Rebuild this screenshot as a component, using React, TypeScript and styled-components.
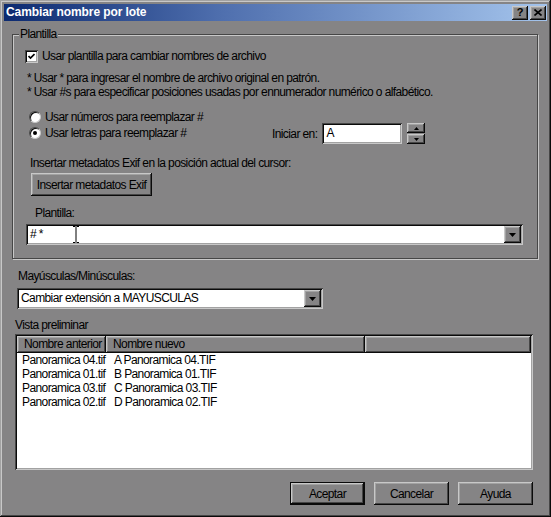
import React from 'react';
import styled, { createGlobalStyle, css } from 'styled-components';

const FACE = '#858485';
const LIGHT = '#c8c8c8';
const MID = '#a2a2a2';
const DARK = '#464646';
const DARKEST = '#0a0a0a';

const Global = createGlobalStyle`
  html, body { margin: 0; padding: 0; background: ${FACE}; }
  body {
    font-family: "Liberation Sans", Arial, sans-serif;
    font-size: 12px;
    letter-spacing: -0.6px;
    color: #000;
  }
  * { box-sizing: border-box; }
`;

const raised = css`
  background: ${FACE};
  box-shadow: inset -1px -1px ${DARKEST}, inset 1px 1px ${LIGHT}, inset -2px -2px ${DARK}, inset 2px 2px ${MID};
`;

const sunken = css`
  box-shadow: inset 1px 1px ${DARK}, inset -1px -1px ${LIGHT}, inset 2px 2px ${DARKEST}, inset -2px -2px ${MID};
`;

const Window = styled.div`
  width: 551px;
  height: 517px;
  background: ${FACE};
  padding: 4px;
  display: flex;
  flex-direction: column;
  box-shadow: inset -1px -1px ${DARKEST}, inset 1px 1px ${MID}, inset -2px -2px ${DARK}, inset 2px 2px ${LIGHT};
`;

const TitleBar = styled.div`
  height: 17px;
  display: flex;
  align-items: center;
  padding: 0 1px 0 2px;
  background: linear-gradient(to right, #0c2a70 0%, #4f6fae 40%, #a4c4ec 100%);
`;

const Title = styled.div`
  flex: 1;
  color: #fff;
  font-weight: bold;
  font-size: 12px;
  letter-spacing: -0.1px;
  line-height: 17px;
`;

const CaptionButtons = styled.div`
  display: flex;
  gap: 2px;
`;

const CaptionButton = styled.div`
  ${raised};
  width: 16px;
  height: 14px;
  display: flex;
  align-items: center;
  justify-content: center;
  font-weight: bold;
  font-size: 11px;
  letter-spacing: 0;
  line-height: 14px;
  padding-bottom: 1px;
`;

const Content = styled.div`
  flex: 1;
  display: flex;
  flex-direction: column;
`;

const GroupBox = styled.div`
  position: relative;
  margin: 13px 0 0 8px;
  width: 526px;
  border: 1px solid ${DARK};
  box-shadow: inset 1px 1px ${LIGHT}, 1px 1px ${LIGHT};
  padding: 14px 0 13px 12px;
  display: flex;
  flex-direction: column;
`;

const GroupLabel = styled.span`
  position: absolute;
  top: -8px;
  left: 6px;
  padding: 0 1px;
  line-height: 14px;
  background: ${FACE};
`;

const Text = styled.div<{ $ml?: number; $mt?: number }>`
  line-height: 14px;
  white-space: nowrap;
  margin-left: ${p => p.$ml ?? 0}px;
  margin-top: ${p => p.$mt ?? 0}px;
`;

const CheckRow = styled.label`
  display: flex;
  align-items: center;
  gap: 4px;
  height: 14px;
  line-height: 14px;
`;

const CheckBox = styled.span`
  width: 13px;
  height: 13px;
  background: #fff;
  ${sunken};
  display: flex;
  align-items: center;
  justify-content: center;
`;

const Notes = styled.div`
  margin: 8px 0 0 2px;
  line-height: 14px;
`;

const OptionsRow = styled.div`
  margin-top: 10px;
  display: flex;
  align-items: flex-end;
`;

const RadioColumn = styled.div`
  width: 247px;
  padding-left: 4px;
  display: flex;
  flex-direction: column;
`;

const RadioRow = styled.label`
  display: flex;
  align-items: center;
  gap: 4px;
  height: 16px;
  line-height: 14px;
`;

const Radio = styled.span<{ $checked?: boolean }>`
  position: relative;
  width: 12px;
  height: 12px;
  border-radius: 50%;
  background: #fff;
  border: 1px solid;
  border-color: ${DARK} ${LIGHT} ${LIGHT} ${DARK};
  box-shadow: inset 1px 1px ${DARKEST};
  ${p => p.$checked && css`
    &::after {
      content: '';
      position: absolute;
      left: 3px;
      top: 3px;
      width: 4px;
      height: 4px;
      border-radius: 50%;
      background: #000;
    }
  `}
`;

const StartField = styled.div`
  display: flex;
  align-items: center;
  margin-bottom: -3px;
`;

const StartInput = styled.div`
  width: 80px;
  height: 21px;
  margin-left: 5px;
  background: #fff;
  ${sunken};
  padding: 0 4px;
  line-height: 21px;
`;

const Spinner = styled.div`
  margin-left: 5px;
  display: flex;
  flex-direction: column;
  gap: 1px;
`;

const SpinButton = styled.div`
  ${raised};
  width: 18px;
  height: 10px;
  display: flex;
  align-items: center;
  justify-content: center;
`;

const PushButton = styled.div<{ $w: number; $default?: boolean }>`
  ${raised};
  width: ${p => p.$w}px;
  height: 23px;
  display: flex;
  align-items: center;
  justify-content: center;
  line-height: 14px;
  ${p => p.$default && css`
    box-shadow: inset 0 0 0 1px ${DARKEST}, inset -2px -2px ${DARKEST}, inset 2px 2px ${LIGHT}, inset -3px -3px ${DARK}, inset 3px 3px ${MID};
  `}
`;

const ExifButton = styled(PushButton)`
  margin: 3px 0 0 6px;
`;

const Combo = styled.div<{ $w: number; $ml: number; $mt: number }>`
  position: relative;
  width: ${p => p.$w}px;
  height: 21px;
  margin: ${p => p.$mt}px 0 0 ${p => p.$ml}px;
  background: #fff;
  ${sunken};
  padding: 2px;
  display: flex;
  align-items: center;
`;

const ComboText = styled.div`
  flex: 1;
  padding-left: 2px;
  line-height: 17px;
  white-space: nowrap;
`;

const DropButton = styled.div`
  ${raised};
  width: 17px;
  height: 17px;
  display: flex;
  align-items: center;
  justify-content: center;
`;

const IBeam = styled.svg`
  position: absolute;
  left: 46px;
  top: 2px;
`;

const ListView = styled.div`
  margin: 2px 0 0 11px;
  width: 518px;
  height: 136px;
  background: #fff;
  ${sunken};
  padding: 2px;
  display: flex;
  flex-direction: column;
`;

const HeaderRow = styled.div`
  display: flex;
  height: 17px;
`;

const HeaderCell = styled.div<{ $w?: number }>`
  ${raised};
  ${p => (p.$w ? css`width: ${p.$w}px;` : css`flex: 1;`)}
  padding-left: 7px;
  line-height: 17px;
  white-space: nowrap;
`;

const Row = styled.div`
  display: flex;
  height: 14px;
  line-height: 14px;
`;

const Cell = styled.div<{ $w: number; $pl: number }>`
  width: ${p => p.$w}px;
  padding-left: ${p => p.$pl}px;
  white-space: nowrap;
`;

const ButtonBar = styled.div`
  margin: 12px 14px 0 0;
  display: flex;
  justify-content: flex-end;
  gap: 9px;
`;

const Tri = ({ up = false, w = 7 }: { up?: boolean; w?: number }) => {
  const h = Math.ceil(w / 2);
  return (
    <svg width={w} height={h} viewBox={`0 0 ${w} ${h}`}>
      <polygon points={up ? `0,${h} ${w},${h} ${w / 2},0` : `0,0 ${w},0 ${w / 2},${h}`} fill="#000" />
    </svg>
  );
};

const rows = [
  ['Panoramica 04.tif', 'A Panoramica 04.TIF'],
  ['Panoramica 01.tif', 'B Panoramica 01.TIF'],
  ['Panoramica 03.tif', 'C Panoramica 03.TIF'],
  ['Panoramica 02.tif', 'D Panoramica 02.TIF'],
];

export default function App() {
  return (
    <>
      <Global />
      <Window>
        <TitleBar>
          <Title>Cambiar nombre por lote</Title>
          <CaptionButtons>
            <CaptionButton>?</CaptionButton>
            <CaptionButton>
              <svg width="8" height="7" viewBox="0 0 8 7">
                <path d="M0.5 0.5 L7.5 6.5 M7.5 0.5 L0.5 6.5" stroke="#000" strokeWidth="1.6" />
              </svg>
            </CaptionButton>
          </CaptionButtons>
        </TitleBar>
        <Content>
          <GroupBox>
            <GroupLabel>Plantilla</GroupLabel>
            <CheckRow>
              <CheckBox>
                <svg width="7" height="7" viewBox="0 0 7 7">
                  <path d="M0.5 3 L2.5 5 L6.5 1" stroke="#000" strokeWidth="1.7" fill="none" />
                </svg>
              </CheckBox>
              Usar plantilla para cambiar nombres de archivo
            </CheckRow>
            <Notes>
              * Usar * para ingresar el nombre de archivo original en patrón.
              <br />* Usar #s para especificar posiciones usadas por ennumerador numérico o alfabético.
            </Notes>
            <OptionsRow>
              <RadioColumn>
                <RadioRow>
                  <Radio />
                  Usar números para reemplazar #
                </RadioRow>
                <RadioRow>
                  <Radio $checked />
                  Usar letras para reemplazar #
                </RadioRow>
              </RadioColumn>
              <StartField>
                <Text>Iniciar en:</Text>
                <StartInput>A</StartInput>
                <Spinner>
                  <SpinButton><Tri up w={5} /></SpinButton>
                  <SpinButton><Tri w={5} /></SpinButton>
                </Spinner>
              </StartField>
            </OptionsRow>
            <Text $ml={5} $mt={15}>Insertar metadatos Exif en la posición actual del cursor:</Text>
            <ExifButton $w={121}>Insertar metadatos Exif</ExifButton>
            <Text $ml={10} $mt={10}>Plantilla:</Text>
            <Combo $w={497} $ml={1} $mt={4}>
              <ComboText># *</ComboText>
              <DropButton><Tri /></DropButton>
              <IBeam width="8" height="17" viewBox="0 0 8 17">
                <path d="M1 0.5 H3.5 M4.5 0.5 H7 M4 1 V16 M1 16.5 H3.5 M4.5 16.5 H7" stroke="#000" strokeWidth="1" fill="none" />
              </IBeam>
            </Combo>
          </GroupBox>
          <Text $ml={14} $mt={10}>Mayúsculas/Minúsculas:</Text>
          <Combo $w={306} $ml={13} $mt={5}>
            <ComboText>Cambiar extensión a MAYUSCULAS</ComboText>
            <DropButton><Tri /></DropButton>
          </Combo>
          <Text $ml={11} $mt={9}>Vista preliminar</Text>
          <ListView>
            <HeaderRow>
              <HeaderCell $w={89}>Nombre anterior</HeaderCell>
              <HeaderCell $w={259}>Nombre nuevo</HeaderCell>
              <HeaderCell />
            </HeaderRow>
            {rows.map(([a, b]) => (
              <Row key={a}>
                <Cell $w={89} $pl={5}>{a}</Cell>
                <Cell $w={259} $pl={8}>{b}</Cell>
              </Row>
            ))}
          </ListView>
          <ButtonBar>
            <PushButton $w={75} $default>Aceptar</PushButton>
            <PushButton $w={75}>Cancelar</PushButton>
            <PushButton $w={75}>Ayuda</PushButton>
          </ButtonBar>
        </Content>
      </Window>
    </>
  );
}
